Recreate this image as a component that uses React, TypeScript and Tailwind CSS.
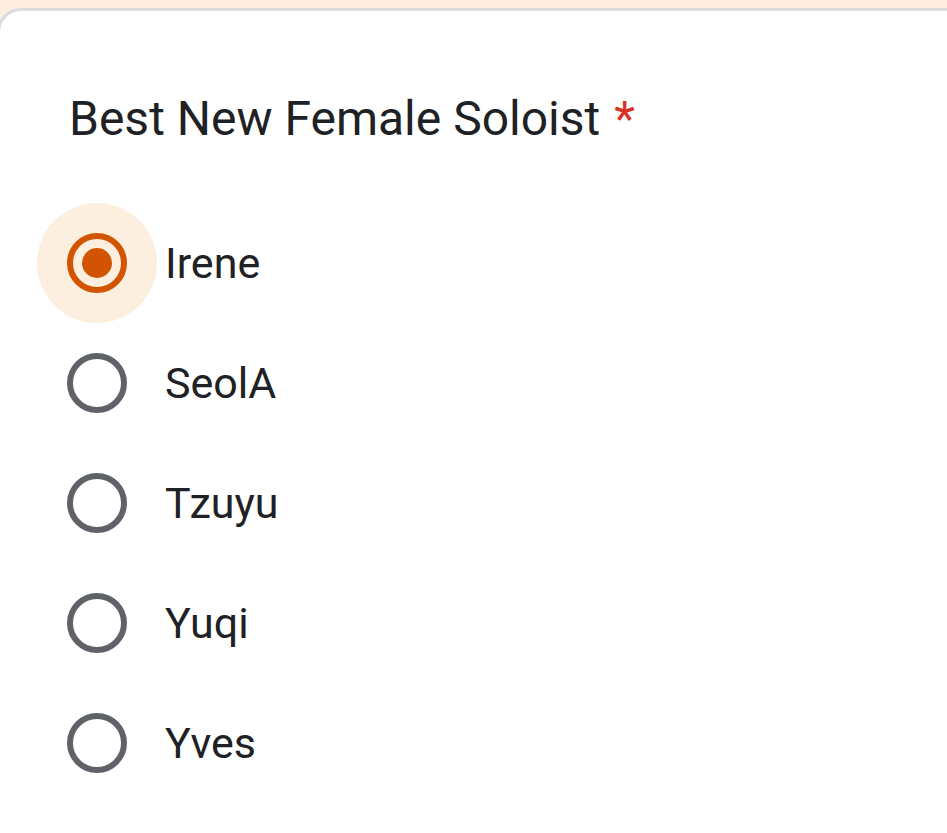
const options = ["Irene", "SeolA", "Tzuyu", "Yuqi", "Yves"];

function Radio({ checked }: { checked: boolean }) {
  return (
    <div
      className={`flex h-[120px] w-[120px] shrink-0 items-center justify-center rounded-full ${
        checked ? "bg-[#fcefdf]" : ""
      }`}
    >
      <div
        className={`flex h-[60px] w-[60px] items-center justify-center rounded-full border-[6px] ${
          checked ? "border-[#d35400]" : "border-[#5f6368]"
        }`}
      >
        {checked && <div className="h-[30px] w-[30px] rounded-full bg-[#d35400]" />}
      </div>
    </div>
  );
}

export default function App() {
  return (
    <div className="h-[833px] w-[947px] overflow-hidden bg-[#fdeee0] pt-[8px] font-['Roboto',sans-serif] text-[#202124]">
      <div className="-ml-[3px] h-[900px] w-[1000px] rounded-tl-[24px] border-[3px] border-[#dadce0] bg-white pr-[72px] pl-[69px] pt-[72px]">
        <h1 className="flex items-baseline text-[48px] leading-[72px] font-normal">
          Best New Female Soloist
          <span className="ml-[14px] text-[#d93025]">*</span>
        </h1>
        <div className="mt-[48px] -ml-[32px] flex flex-col">
          {options.map((o, i) => (
            <label key={o} className="flex h-[120px] items-center gap-[8px]">
              <Radio checked={i === 0} />
              <span className="text-[43px] leading-none">{o}</span>
            </label>
          ))}
        </div>
      </div>
    </div>
  );
}
